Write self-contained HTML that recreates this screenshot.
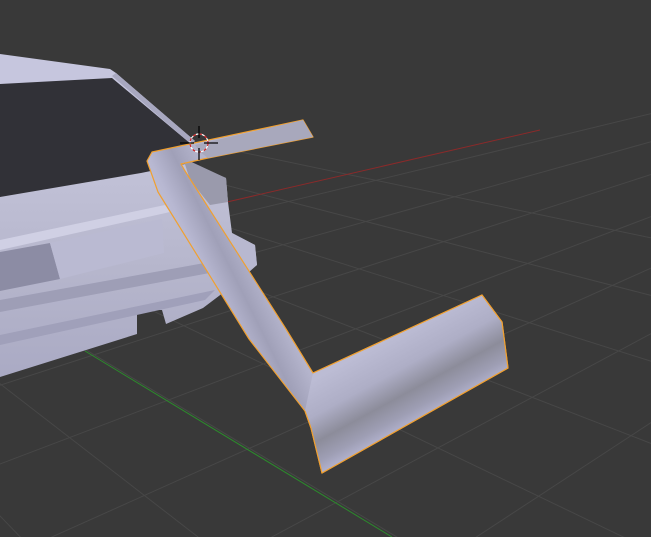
<!DOCTYPE html>
<html><head><meta charset="utf-8"><style>
html,body{margin:0;padding:0;background:#393939;overflow:hidden;width:651px;height:537px}
svg{display:block;position:absolute;left:0;top:0}
</style></head><body>
<svg width="651" height="537" viewBox="0 0 651 537" xmlns="http://www.w3.org/2000/svg">
<defs>
<linearGradient id="wing" gradientUnits="userSpaceOnUse" x1="400" y1="333" x2="443" y2="412">
<stop offset="0" stop-color="#bcbcd4"/><stop offset="0.35" stop-color="#aeaec6"/>
<stop offset="0.62" stop-color="#8c8c9a"/><stop offset="0.82" stop-color="#9e9eb4"/>
<stop offset="1" stop-color="#b8b8d6"/></linearGradient>
<linearGradient id="up" gradientUnits="userSpaceOnUse" x1="165" y1="260" x2="235" y2="225">
<stop offset="0" stop-color="#c6c6da"/><stop offset="0.4" stop-color="#b8b8d2"/>
<stop offset="0.7" stop-color="#a0a0b8"/><stop offset="1" stop-color="#b4b4cc"/></linearGradient>
<linearGradient id="body" x1="0" y1="0" x2="0" y2="1">
<stop offset="0" stop-color="#c2c2d8"/><stop offset="0.5" stop-color="#b6b6cc"/><stop offset="1" stop-color="#aaaac4"/></linearGradient>
</defs>
<g stroke="#474747" stroke-width="1" fill="none">
<line x1="1400" y1="-68" x2="-200" y2="320"/>
<line x1="1400" y1="-68" x2="-200" y2="380"/>
<line x1="1400" y1="-68" x2="-200" y2="450"/>
<line x1="1400" y1="-68" x2="-200" y2="540"/>
<line x1="1400" y1="-68" x2="-200" y2="650"/>
<line x1="1400" y1="-68" x2="-200" y2="790"/>
<line x1="1400" y1="-68" x2="-200" y2="980"/>
<line x1="1400" y1="-68" x2="-200" y2="1250"/>
<line x1="1400" y1="-68" x2="-200" y2="1650"/>
<line x1="-500" y1="-3" x2="900" y2="290"/>
<line x1="-500" y1="-3" x2="900" y2="360"/>
<line x1="-500" y1="-3" x2="900" y2="440"/>
<line x1="-500" y1="-3" x2="900" y2="540"/>
<line x1="-500" y1="-3" x2="900" y2="670"/>
<line x1="-500" y1="-3" x2="900" y2="840"/>
<line x1="-500" y1="-3" x2="900" y2="1080"/>
<line x1="-500" y1="-3" x2="900" y2="1450"/>
</g>
<line x1="227" y1="202" x2="540" y2="130" stroke="#8a2a2a" stroke-width="1"/>
<line x1="85" y1="351" x2="392" y2="537" stroke="#2c8a2c" stroke-width="1"/>
<polygon points="0,83 110,76 190,140 200,165 140,173 0,197" fill="#313137"/>
<polygon points="0,54 110,69 116,73 195,141 191,144 112,78 0,84" fill="#c6c6de"/>
<polygon points="112,76 116,73 195,141 191,144" fill="#a8a8c0"/>
<polygon points="0,197 141,173 190,163 226,178 228,202 232,233 255,245 257,265 240,280 203,308 166,324 162,310 137,310 137,334 0,377" fill="url(#body)"/>
<polygon points="0,240 165,205 170,212 0,250" fill="#d0d0e4"/>
<polygon points="0,252 50,243 60,279 0,291" fill="#8c8ca4"/>
<polygon points="50,243 162,219 164,253 60,279" fill="#babad2"/>
<polygon points="0,300 210,262 215,272 0,312" fill="#9e9eb6"/>
<polygon points="0,335 215,290 205,300 0,345" fill="#a0a0ba"/>
<polygon points="183,158 226,178 228,202 210,205 190,180" fill="#9a9aac"/>
<polygon points="232,233 255,245 257,265 240,275" fill="#b8b8d0"/>
<polygon points="147,161 152,152 303,120 313,137 208,158 181,164 185,171 286,329 313,373 482,295 502,322 508,368 322,473 311,428 305,411 249,339 158,192" fill="url(#up)" stroke="#f0a030" stroke-width="1.2" stroke-linejoin="round"/>
<polygon points="195,145 303,120 313,137 208,158 200,152" fill="#a8a8bc"/>
<polygon points="313,373 482,295 502,322 508,368 322,473 311,428 305,411" fill="url(#wing)"/>
<polyline points="313,373 482,295 502,322 508,368 322,473 311,428 305,411" fill="none" stroke="#f0a030" stroke-width="1.2"/>
<circle cx="199" cy="143" r="9" fill="none" stroke="#fff" stroke-width="1.2"/>
<circle cx="199" cy="143" r="9" fill="none" stroke="#d02020" stroke-width="1.2" stroke-dasharray="3,3"/>
<g stroke="#000" stroke-width="1.2">
<line x1="199" y1="126" x2="199" y2="138"/><line x1="199" y1="148" x2="199" y2="160"/>
<line x1="180" y1="143" x2="194" y2="143"/><line x1="204" y1="143" x2="218" y2="143"/>
</g>
</svg>
</body></html>
